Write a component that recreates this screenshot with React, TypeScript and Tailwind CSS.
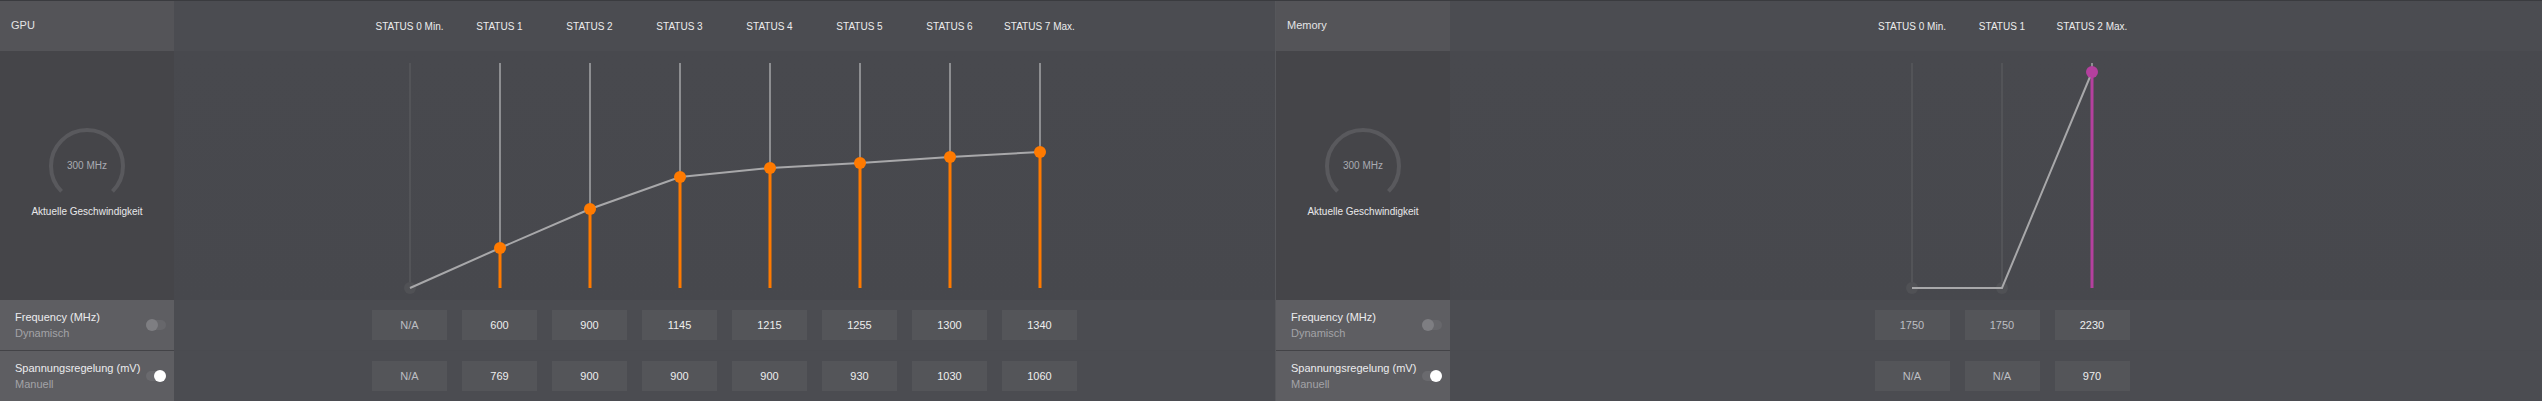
import React from "react";

type PanelData = {
  title: string;
  labels: string[];
  freq: string[];
  volt: string[];
  ys: number[];
  active: boolean[];
  accent: string;
  dimFreq: boolean[];
  dimVolt: boolean[];
  width: string;
};

const gpu: PanelData = {
  title: "GPU",
  labels: ["STATUS 0 Min.", "STATUS 1", "STATUS 2", "STATUS 3", "STATUS 4", "STATUS 5", "STATUS 6", "STATUS 7 Max."],
  freq: ["N/A", "600", "900", "1145", "1215", "1255", "1300", "1340"],
  volt: ["N/A", "769", "900", "900", "900", "930", "1030", "1060"],
  ys: [237, 197, 158, 126, 117, 112, 106, 101],
  active: [false, true, true, true, true, true, true, true],
  accent: "#ff7a00",
  dimFreq: [true, false, false, false, false, false, false, false],
  dimVolt: [true, false, false, false, false, false, false, false],
  width: "w-[1275px]",
};

const memory: PanelData = {
  title: "Memory",
  labels: ["STATUS 0 Min.", "STATUS 1", "STATUS 2 Max."],
  freq: ["1750", "1750", "2230"],
  volt: ["N/A", "N/A", "970"],
  ys: [237, 237, 21],
  active: [false, false, true],
  accent: "#b4409e",
  dimFreq: [true, true, false],
  dimVolt: [true, true, false],
  width: "w-[1278px]",
};

function Gauge() {
  const cx = 40;
  const cy = 38;
  const r = 36;
  const a0 = (135 * Math.PI) / 180;
  const a1 = (45 * Math.PI) / 180;
  const x0 = cx + r * Math.cos(a0);
  const y0 = cy + r * Math.sin(a0);
  const x1 = cx + r * Math.cos(a1);
  const y1 = cy + r * Math.sin(a1);
  return (
    <div className="relative h-[68px] w-[80px]">
      <svg width="80" height="68" viewBox="0 0 80 68">
        <path
          d={`M ${x0} ${y0} A ${r} ${r} 0 1 1 ${x1} ${y1}`}
          fill="none"
          stroke="#59595d"
          strokeWidth="4"
        />
      </svg>
      <div className="absolute left-0 top-[30px] flex h-[16px] w-[80px] items-center justify-center text-[10px] leading-[16px] text-[#a9abb2]">
        300 MHz
      </div>
    </div>
  );
}

function Toggle({ on }: { on: boolean }) {
  return (
    <div className={`relative h-[10px] w-[20px] rounded-full ${on ? "bg-[#6a6a6e]" : "bg-[#67676b]"}`}>
      <div
        className={`absolute top-[-1px] h-[12px] w-[12px] rounded-full ${on ? "right-0 bg-white" : "left-0 bg-[#7e7e82]"}`}
      />
    </div>
  );
}

function ChartSvg({ d }: { d: PanelData }) {
  const n = d.labels.length;
  const w = n * 90;
  const xs = d.labels.map((_, i) => 45 + 90 * i);
  const pts = xs.map((x, i) => `${x},${d.ys[i]}`).join(" ");
  return (
    <svg width={w} height="249" viewBox={`0 0 ${w} 249`}>
      {xs.map((x, i) =>
        d.active[i] ? (
          <g key={i}>
            <line x1={x} y1={12} x2={x} y2={d.ys[i]} stroke="#8d8e91" strokeWidth="2" />
            <line x1={x} y1={d.ys[i]} x2={x} y2={237} stroke={d.accent} strokeWidth="3" />
          </g>
        ) : (
          <g key={i}>
            <line x1={x} y1={12} x2={x} y2={237} stroke="#57585c" strokeWidth="1.5" />
            <circle cx={x} cy={237} r="6" fill="#505155" />
          </g>
        )
      )}
      <polyline points={pts} fill="none" stroke="#a8a8aa" strokeWidth="2" />
      {xs.map((x, i) =>
        d.active[i] ? <circle key={i} cx={x} cy={d.ys[i]} r="6" fill={d.accent} /> : null
      )}
    </svg>
  );
}

function ValueRow({ values, dim }: { values: string[]; dim: boolean[] }) {
  return (
    <div className="flex flex-1 items-center justify-center bg-[#4b4c51]">
      <div className="flex">
        {values.map((v, i) => (
          <div key={i} className="flex w-[90px] justify-center">
            <div
              className={`flex h-[30px] w-[75px] items-center justify-center bg-[#545559] text-[11px] ${dim[i] ? "text-[#bdbec2]" : "text-[#eeeeee]"}`}
            >
              {v}
            </div>
          </div>
        ))}
      </div>
    </div>
  );
}

function Panel({ d }: { d: PanelData }) {
  return (
    <div className={`flex shrink-0 flex-col ${d.width}`}>
      {/* header */}
      <div className="flex h-[50px]">
        <div className="flex w-[174px] items-center bg-[#545458] pl-[11px] pb-[2px] text-[11px] text-[#e4e4e6]">
          {d.title}
        </div>
        <div className="flex flex-1 items-center justify-center bg-[#4b4c51]">
          <div className="flex">
            {d.labels.map((l, i) => (
              <div key={i} className="flex w-[90px] justify-center whitespace-nowrap text-[10px] text-[#ededed]">
                {l}
              </div>
            ))}
          </div>
        </div>
      </div>
      {/* chart */}
      <div className="flex h-[249px]">
        <div className="flex w-[174px] flex-col items-center justify-center bg-[#454549] pb-[4px]">
          <Gauge />
          <div className="mt-[9px] text-[10px] leading-[14px] text-[#e8e8ea]">Aktuelle Geschwindigkeit</div>
        </div>
        <div className="flex flex-1 justify-center bg-gradient-to-b from-[#48494e] to-[#47484d]">
          <ChartSvg d={d} />
        </div>
      </div>
      {/* frequency row */}
      <div className="flex h-[50px]">
        <div className="flex w-[174px] items-center justify-between bg-[#5e5e62] pl-[15px] pr-[8px]">
          <div className="flex flex-col">
            <span className="text-[11px] leading-[16px] text-[#ececee]">Frequency (MHz)</span>
            <span className="text-[11px] leading-[16px] text-[#a3a3a7]">Dynamisch</span>
          </div>
          <Toggle on={false} />
        </div>
        <ValueRow values={d.freq} dim={d.dimFreq} />
      </div>
      <div className="flex h-px">
        <div className="w-[174px] bg-[#434347]" />
        <div className="flex-1 bg-[#4a4b50]" />
      </div>
      {/* voltage row */}
      <div className="flex h-[50px]">
        <div className="flex w-[174px] items-center justify-between bg-[#5e5e62] pl-[15px] pr-[8px]">
          <div className="flex flex-col">
            <span className="text-[11px] leading-[16px] text-[#ececee]">Spannungsregelung (mV)</span>
            <span className="text-[11px] leading-[16px] text-[#a3a3a7]">Manuell</span>
          </div>
          <Toggle on={true} />
        </div>
        <ValueRow values={d.volt} dim={d.dimVolt} />
      </div>
    </div>
  );
}

export default function App() {
  return (
    <div className="w-[2542px] overflow-hidden bg-white font-[family-name:'Liberation_Sans',Arial,sans-serif]">
      <div className="flex border-t border-[#3a3b3f]">
        <Panel d={gpu} />
        <div className="w-px shrink-0 bg-[#56575b]" />
        <Panel d={memory} />
      </div>
    </div>
  );
}
